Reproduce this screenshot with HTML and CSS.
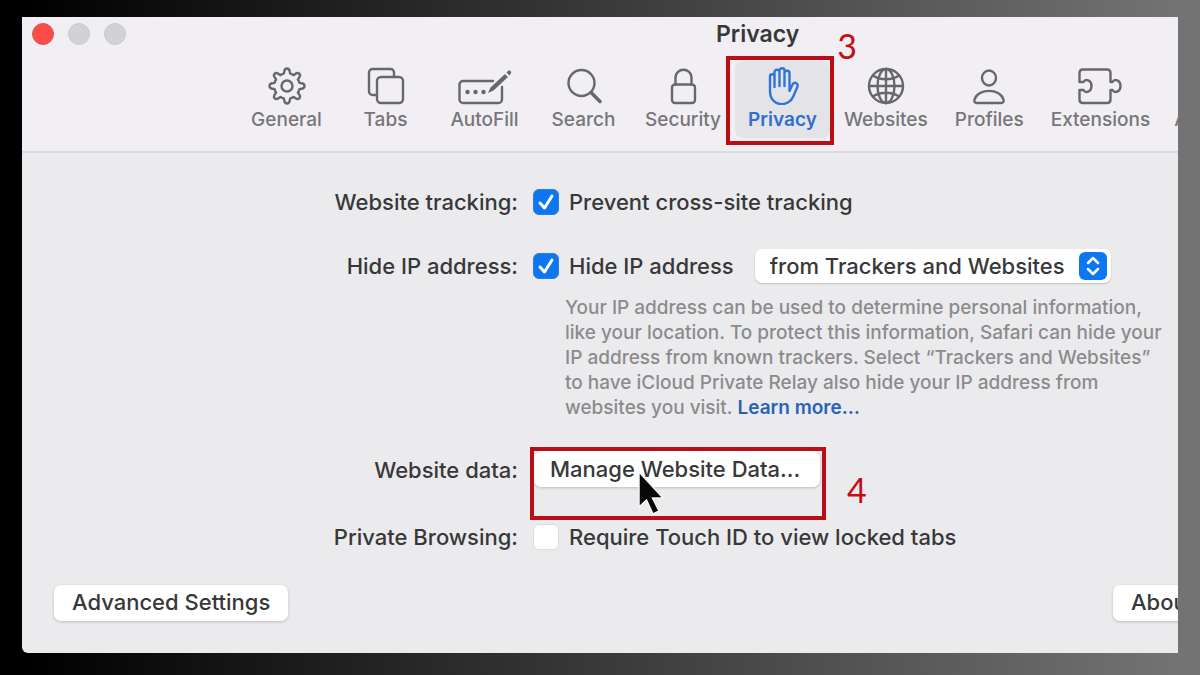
FILE: index.html
```
<!DOCTYPE html>
<html lang="en">
<head>
<meta charset="utf-8">
<title>Privacy</title>
<link rel="stylesheet" href="styles.css">
</head>
<body>
<main class="window">
  <header class="header">
    <div class="titlebar">
      <div class="lights">
        <button class="light light-close" aria-label="Close"></button>
        <button class="light" aria-label="Minimize"></button>
        <button class="light" aria-label="Zoom"></button>
      </div>
      <h1 class="title">Privacy</h1>
    </div>
    <nav class="toolbar">
      <button class="tab">
        <svg class="icon" width="38" height="38" viewBox="0 0 38 38"><path d="M16.300 4.200Q16.800 1.500 19.000 1.500Q21.200 1.500 21.700 4.200L22.200 6.600Q24.300 7.100 25.500 8.200L27.600 6.700Q29.800 5.200 31.300 6.700Q32.800 8.200 31.300 10.400L29.900 12.500Q30.900 13.700 31.400 15.800L33.800 16.300Q36.500 16.800 36.500 19.000Q36.500 21.200 33.800 21.700L31.400 22.200Q30.900 24.300 29.900 25.500L31.300 27.600Q32.800 29.800 31.300 31.300Q29.800 32.800 27.600 31.300L25.500 29.900Q24.300 30.900 22.200 31.400L21.700 33.800Q21.200 36.500 19.000 36.500Q16.800 36.500 16.300 33.800L15.800 31.400Q13.700 30.900 12.500 29.900L10.400 31.300Q8.200 32.800 6.700 31.300Q5.200 29.800 6.700 27.600L8.100 25.500Q7.100 24.300 6.600 22.200L4.200 21.700Q1.500 21.200 1.500 19.000Q1.500 16.800 4.200 16.300L6.600 15.800Q7.100 13.700 8.100 12.500L6.700 10.400Q5.200 8.200 6.700 6.700Q8.200 5.200 10.400 6.700L12.500 8.200Q13.700 7.100 15.800 6.600Z"/><circle cx="19" cy="19" r="5.500"/></svg>
        <span>General</span>
      </button>
      <button class="tab">
        <svg class="icon" width="38" height="38" viewBox="0 0 38 38"><path d="M10 28H5.500A3.500 3.500 0 0 1 2 24.500V5.500A3.500 3.500 0 0 1 5.500 2H23.500A3.500 3.500 0 0 1 27 5.500V10"/><rect x="10" y="10" width="26" height="26" rx="4"/></svg>
        <span>Tabs</span>
      </button>
      <button class="tab">
        <svg class="icon" width="54" height="38" viewBox="0 0 54 38"><path d="M35 14H5A3.500 3.500 0 0 0 1.500 17.500V32.500A3.500 3.500 0 0 0 5 36H40.500A3.500 3.500 0 0 0 44 32.500V20"/><g class="solid"><circle cx="9.500" cy="25" r="2.200"/><circle cx="17.500" cy="25" r="2.200"/><circle cx="25.500" cy="25" r="2.200"/><path d="M30 26L32.500 20.500L47 7L50 10L35.500 23.500ZM48.500 5.500L50.500 3.500Q52 3 53 4.500Q53.500 5.500 52.500 7L51.500 8.500Z"/></g></svg>
        <span>AutoFill</span>
      </button>
      <button class="tab">
        <svg class="icon" width="38" height="38" viewBox="0 0 38 38"><circle cx="16.500" cy="16" r="13"/><path class="thick" d="M26 25.500L35 34.500"/></svg>
        <span>Search</span>
      </button>
      <button class="tab">
        <svg class="icon" width="38" height="38" viewBox="0 0 38 38"><rect x="8" y="17.500" width="23" height="18.500" rx="3"/><path d="M11.500 17.500V11C11.500 0 27.500 0 27.500 11V17.500"/></svg>
        <span>Security</span>
      </button>
      <div class="marked">
        <button class="tab tab-active" aria-current="page">
          <svg class="icon" width="38" height="38" viewBox="0 0 38 38"><path d="M6 24V9.500C6 6.500 10.500 6.500 10.500 9.500V20V5C10.500 2 15.500 2 15.500 5V19V3.500C15.500.5 20.500.5 20.500 3.500V19V6C20.500 3 25.500 3 25.500 6V24L28.500 17.500C30.500 14.500 34.500 16 33.500 19.500L29.500 29C25 41 6 40 6 24Z"/></svg>
          <span>Privacy</span>
        </button>
        <span class="frame frame-tab"></span>
        <span class="step step-tab">3</span>
      </div>
      <button class="tab">
        <svg class="icon" width="38" height="38" viewBox="0 0 38 38"><circle cx="19" cy="19" r="17"/><ellipse cx="19" cy="19" rx="8.500" ry="17"/><path d="M19 2V36M2 19H36M6 8.500C13 13.500 25 13.500 32 8.500M6 29.500C13 24.500 25 24.500 32 29.500"/></svg>
        <span>Websites</span>
      </button>
      <button class="tab">
        <svg class="icon" width="38" height="38" viewBox="0 0 38 38"><ellipse cx="19" cy="11" rx="7" ry="7.500"/><path d="M7 36C4.500 36 4 34.500 4.500 32.500C8 21 30 21 33.500 32.500C34 34.500 33.500 36 31 36Z"/></svg>
        <span>Profiles</span>
      </button>
      <button class="tab">
        <svg class="icon" width="44" height="38" viewBox="0 0 44 38"><path d="M5 2.500H29Q32.500 2.500 32.500 6V15H34.500C36.500 11.500 42.500 13 42.500 19C42.500 25 36.500 26.500 34.500 23H32.500V32.500Q32.500 36 29 36H5Q1.500 36 1.500 32.500V23H5.500C7.500 26.500 13.500 25 13.500 19C13.500 13 7.500 11.500 5.500 15H1.500V6Q1.500 2.500 5 2.500Z"/></svg>
        <span>Extensions</span>
      </button>
      <button class="tab">
        <svg class="icon" width="38" height="38" viewBox="0 0 38 38"><circle cx="19" cy="19" r="16"/></svg>
        <span>Advanced</span>
      </button>
    </nav>
  </header>

  <form class="settings">
    <span class="name">Website tracking:</span>
    <label class="row">
      <span class="check"><input type="checkbox" checked><svg viewBox="0 0 26 26"><path d="M7 14L11.500 19L19 7"/></svg></span>
      Prevent cross-site tracking
    </label>

    <span class="name">Hide IP address:</span>
    <div>
      <div class="row">
        <label class="row">
          <span class="check"><input type="checkbox" checked><svg viewBox="0 0 26 26"><path d="M7 14L11.500 19L19 7"/></svg></span>
          Hide IP address
        </label>
        <span class="popup">
          <select aria-label="Hide IP address from">
            <option>from Trackers and Websites</option>
          </select>
          <svg viewBox="0 0 28 28"><path d="M9 11L14 6L19 11M9 17L14 22L19 17"/></svg>
        </span>
      </div>
      <p class="help">Your IP address can be used to determine personal information,<br>like your location. To protect this information, Safari can hide your<br>IP address from known trackers. Select “Trackers and Websites”<br>to have iCloud Private Relay also hide your IP address from<br>websites you visit. <a href="#">Learn more…</a></p>
    </div>

    <span class="name name-data">Website data:</span>
    <div class="marked marked-data">
      <button type="button" class="push push-data">Manage Website Data...</button>
      <span class="frame frame-data"></span>
      <span class="step step-data">4</span>
      <svg class="cursor" width="30" height="46" viewBox="0 0 30 46"><path d="M3 2V37L10.500 30L17 44L23 41L16.500 28H27Z"/></svg>
    </div>

    <span class="name">Private Browsing:</span>
    <label class="row">
      <span class="check"><input type="checkbox"></span>
      Require Touch ID to view locked tabs
    </label>
  </form>

  <footer class="footer">
    <button class="push">Advanced Settings</button>
    <div class="footer-end"><button class="push">About Safari &amp; Privacy…</button></div>
  </footer>
</main>
</body>
</html>
```
FILE: styles.css
```
* { box-sizing: border-box; }

body {
  margin: 0;
  min-height: 100vh;
  padding: 17px 22px 22px;
  display: flex;
  background: linear-gradient(90deg, #000 2%, #737373 98%);
  font-family: Inter, "Liberation Sans", sans-serif;
  font-size: 22px;
  font-weight: 500;
  color: #38383b;
}

button, select, input { font: inherit; color: inherit; margin: 0; }
button { border: 0; padding: 0; background: none; }

.window {
  flex: 1;
  min-width: 0;
  display: flex;
  flex-direction: column;
  overflow: hidden;
  background: #ebebed;
  border-bottom-left-radius: 6px;
}

.header {
  background: #f1eff3;
  border-bottom: 2px solid #dadade;
  padding-bottom: 13px;
}

.titlebar {
  display: flex;
  align-items: center;
  height: 34px;
  padding-left: 10px;
}

.lights { display: flex; gap: 14px; width: 684px; }
.light { width: 22px; height: 22px; border-radius: 50%; background: #d2d1d4; border: 1px solid #cac9cc; }
.light-close { background: #fc4c47; border-color: #e2534f; }
.title { margin: 0; font-size: 23px; font-weight: 600; line-height: 34px; }

.toolbar { display: flex; gap: 4px; padding: 10px 0 0 217px; }

.tab {
  flex: none;
  min-width: 95px;
  height: 77px;
  padding: 6px 10px 0;
  display: flex;
  flex-direction: column;
  align-items: center;
  gap: 3px;
  border-radius: 8px;
  font-size: 19px;
  line-height: 24px;
  color: #77767a;
}
.tab-active { background: #e4e3e7; color: #2f6fcd; font-weight: 600; }

.icon { fill: none; stroke: #68676b; stroke-width: 2.400; stroke-linejoin: round; stroke-linecap: round; }
.icon .thick { stroke-width: 3.500; }
.icon .solid { fill: #68676b; stroke: none; }
.tab-active .icon { stroke: #2f74d8; }

.marked { position: relative; flex: none; }
.frame { position: absolute; border: 4px solid #b90e16; pointer-events: none; }
.frame-tab { inset: -5px -4px -7px -9px; }
.frame-data { inset: -4px -6px -31px -4px; }
.step { position: absolute; font-family: Lato, sans-serif; font-size: 34px; font-weight: 400; line-height: 34px; color: #c40d14; }
.step-tab { right: -27px; top: -32px; z-index: 1; }
.step-data { left: 313px; top: 22px; }
.cursor { position: absolute; left: 102px; top: 19px; fill: #080808; stroke: #f4f4f4; stroke-width: 1.500; }

.settings {
  display: grid;
  grid-template-columns: 496px 1fr;
  column-gap: 15px;
  row-gap: 30px;
  padding-top: 32px;
  line-height: 34px;
  white-space: nowrap;
}
.name { text-align: right; }
.row { display: flex; align-items: center; gap: 10px; height: 34px; }

.check { position: relative; width: 26px; height: 26px; }
.check input {
  appearance: none;
  display: block;
  width: 26px;
  height: 26px;
  border-radius: 6px;
  border: 1px solid #dddde0;
  background: #fff;
}
.check input:checked { background: #0f76f1; border-color: #2c7be0; }
.check svg { position: absolute; inset: 0; fill: none; stroke: #fff; stroke-width: 3; stroke-linecap: round; stroke-linejoin: round; pointer-events: none; }

.popup { position: relative; margin-left: 11px; }
.popup select {
  appearance: none;
  display: block;
  width: 356px;
  height: 34px;
  padding: 0 0 2px 15px;
  border: 0;
  border-radius: 7px;
  background: #fff;
  box-shadow: 0 1px 2px #0003;
}
.popup svg {
  position: absolute;
  right: 4px;
  top: 3px;
  width: 28px;
  height: 28px;
  border-radius: 6px;
  background: #0f76f1;
  fill: none;
  stroke: #fff;
  stroke-width: 2.500;
  stroke-linecap: round;
  stroke-linejoin: round;
  pointer-events: none;
}

.help { margin: 12px 0 0 32px; font-size: 19px; line-height: 25px; color: #8b8b8e; }
.help a { color: #2b62b8; font-weight: 600; text-decoration: none; }

.name-data { line-height: 40px; }
.marked-data { justify-self: start; margin: 1px; }

.push {
  height: 36px;
  padding: 0 18px 2px;
  border-radius: 7px;
  background: #fff;
  box-shadow: 0 1px 3px #0003;
  white-space: nowrap;
}
.push-data { display: block; padding: 0 20px 0 16px; }

.footer {
  display: flex;
  justify-content: space-between;
  margin-top: auto;
  padding: 30px 0 32px 32px;
}
.footer-end { width: 65px; }
```
